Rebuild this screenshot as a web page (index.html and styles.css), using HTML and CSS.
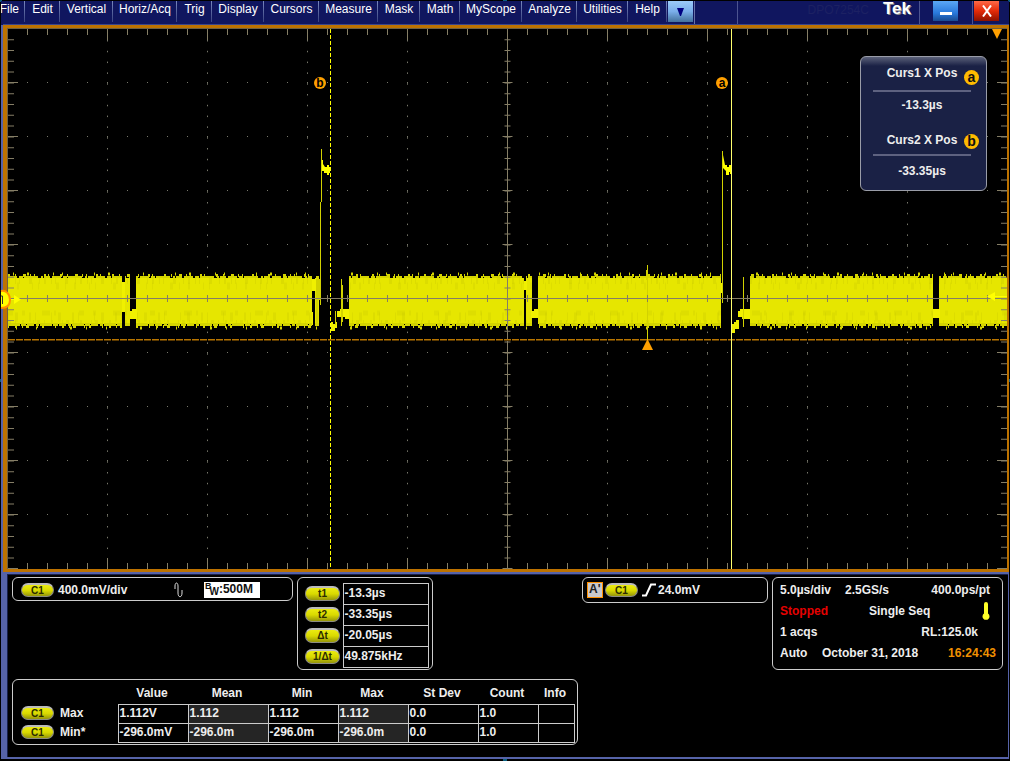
FILE: index.html
```html
<!DOCTYPE html>
<html lang="en">
<head>
<meta charset="utf-8">
<title>Tek DPO7254C</title>
<link rel="stylesheet" href="styles.css">
</head>
<body>
<div class="scope">
  <header class="menubar">
    <nav class="menus">
      <button class="menu first">File</button><button class="menu">Edit</button><button class="menu">Vertical</button><button class="menu">Horiz/Acq</button><button class="menu">Trig</button><button class="menu">Display</button><button class="menu">Cursors</button><button class="menu">Measure</button><button class="menu">Mask</button><button class="menu">Math</button><button class="menu">MyScope</button><button class="menu">Analyze</button><button class="menu">Utilities</button><button class="menu">Help</button>
    </nav>
    <div class="more"><button class="more-btn" aria-label="More menus"><svg width="8" height="8" viewBox="0 0 8 8"><path d="M0 0H7L4 8H3Z" fill="#000080"/></svg></button></div>
    <div class="slot"></div>
    <div class="brand"><span class="model">DPO7254C</span><span class="tek">Tek</span></div>
    <div class="win"><button class="win-btn min" aria-label="Minimize"><svg width="12" height="3"><rect width="12" height="3" fill="#fff"/></svg></button></div>
    <div class="win last"><button class="win-btn close" aria-label="Close"><svg width="10" height="12" viewBox="0 0 10 12"><path d="M1 0.5L9 11.5M9 0.5L1 11.5" stroke="#fff" stroke-width="2"/></svg></button></div>
  </header>

  <main class="plot">
    <svg class="trace" viewBox="8 29 999 540" role="img" aria-label="Channel 1 waveform">
      <defs>
        <clipPath id="bursts">
          <path d="M8 265H122V335H8ZM125 265H130V335H125ZM136 265H312V335H136ZM315 265H319V335H315ZM349 265H524V335H349ZM526 265H532V335H526ZM538 265H721V335H538ZM750 265H933V335H750ZM939 265H1007V335H939Z"/>
        </clipPath>
      </defs>

      <g fill="none" stroke="#77776a">
        <path d="M107.500 29V569M207.500 29V569M307.500 29V569M407.500 29V569M607.500 29V569M707.500 29V569M807.500 29V569M907.500 29V569" stroke-dasharray="1.500 9.300" stroke-dashoffset="-0.200"/>
        <path d="M27 82.500H1007M27 136.500H1007M27 190.500H1007M27 244.500H1007M27 352.500H1007M27 406.500H1007M27 460.500H1007M27 514.500H1007" stroke-dasharray="1 19"/>
      </g>

      <g clip-path="url(#bursts)">
        <rect x="8" y="278" width="999" height="46" fill="#e6e600"/>
        <g fill="none" stroke="#d4d400">
          <path d="M8 277H1007" stroke-width="2" stroke-dasharray="9 2 4 1 14 3 2 1 6 2"/>
          <path d="M8 275.500H1007" stroke-width="3" stroke-dasharray="2 5 1 7 3 4 1 3 1 9 2 2 1 11"/>
          <path d="M13 274H1007" stroke-width="3" stroke-dasharray="1 13 2 24 1 8 1 31"/>
          <path d="M8 324.500H1007" stroke-width="3" stroke-dasharray="12 1 5 1 7 2 3 1"/>
          <path d="M8 326.500H1007" stroke-width="3" stroke-dasharray="1 6 2 5 1 3 3 8 1 4 2 11"/>
          <path d="M16 328H1007" stroke-width="3" stroke-dasharray="1 19 1 33 2 14"/>
        </g>
        <g fill="none" stroke="#cccc00">
          <path d="M8 281H1007" stroke-width="6" stroke-dasharray="2 5 1 3 1 9 3 7 1 4" opacity=".4"/>
          <path d="M8 286H1007" stroke-width="7" stroke-dasharray="1 8 2 13 1 5 1 17 3 6" opacity=".3"/>
          <path d="M8 313H1007" stroke-width="5" stroke-dasharray="5 9 3 17 8 4 2 23" opacity=".3"/>
          <path d="M8 317H1007" stroke-width="9" stroke-dasharray="1 6 3 11 2 4 1 15" opacity=".35"/>
          <path d="M8 322H1007" stroke-width="4" stroke-dasharray="3 4 1 6 2 9 1 3" opacity=".4"/>
        </g>
      </g>

      <g fill="#f0f000">
        <path d="M122 282H125V312H122ZM312 279H316V291H312ZM312 312H313V325H312ZM524 281H527V290H524ZM721 283H723V293H721Z"/>
        <path d="M130 311H132V309H137V319H130ZM531 311H534V309H538V318H531ZM933 309H940V318H933Z"/>
        <path d="M316 279H320V300H318V325H316Z" fill="#d2d200"/>
        <path d="M331 322H333V324H335V322H337V328H335V331H331ZM337 311H340V309H349V319H345V317H337ZM731 324H734V322H736V320H739V329H735V333H732ZM738 311H740V309H750V319H742V317H738Z"/>
        <path d="M322 160H323V164L325 167H327V165H329V167H330V173H329V175H327V173H324V171H322ZM722 155H723L725 165H727V167H729V165H731V174H730V172H729V175H726V171L723 168Z" fill="#ff0"/>
      </g>
      <g stroke="#d2d200" fill="none">
        <path d="M320.500 202V305M321.500 149V202M722.500 151V303M335.500 311V325M341.500 279V326M342.500 285V322M743.500 277V327M647.500 265V341M646.500 270V280"/>
      </g>

      <g fill="none" stroke="#857e66">
        <path d="M8 298.500H1007M507.500 29V569"/>
        <path d="M27 298.500H1007" stroke-width="7" stroke-dasharray="1 19"/>
        <path d="M27 32H1007M27 566H1007" stroke-width="6" stroke-dasharray="1 19"/>
        <path d="M107 34.500H1007M107 563.500H1007" stroke-width="11" stroke-dasharray="1 99"/>
        <path d="M11 39.200V569M507.500 39.200V569M1004 39.200V569" stroke-width="6" stroke-dasharray="1 9.800"/>
        <path d="M13 82V569M507.500 82V569M1002 82V569" stroke-width="10" stroke-dasharray="1 53"/>
      </g>

      <path d="M8 339.500H1007" stroke="#b87500" stroke-dasharray="7 1"/>
      <path d="M8 340.500H1007" stroke="#5b3900" stroke-dasharray="7 1"/>
      <path d="M330.500 29V569" stroke="#ff0" stroke-dasharray="4 2"/>
      <path d="M731.500 29V569" stroke="#ffff6e"/>

      <path d="M992 29H1002L997 39Z" fill="#ffa000"/>
      <path d="M647.500 339L653 350H642Z" fill="#ffa000"/>
      <path d="M987 296.500L995 292V296H1007V297H995V301Z" fill="#ff0"/>
      <path d="M10 299H14V295L21 299.500L14 304V300H10Z" fill="#ff0"/>
      <path d="M1 291C6 290 10 294 10 300S6 308 1 308Z" fill="#ff0"/>
      <path d="M1 291C6 290 10 294 10 300S6 308 1 308" fill="none" stroke="#ff9000" stroke-width="2"/>
      <path d="M1 296H2.500V304" fill="none" stroke="#333"/>

      <g class="cursor-tag">
        <circle cx="320" cy="83" r="6"/><text x="320" y="87">b</text>
        <circle cx="722" cy="83" r="6"/><text x="722" y="87">a</text>
      </g>
    </svg>

    <aside class="readout">
      <div class="readout-head">Curs1 X Pos<span class="badge">a</span></div>
      <div class="readout-value">-13.3µs</div>
      <div class="readout-head second">Curs2 X Pos<span class="badge">b</span></div>
      <div class="readout-value">-33.35µs</div>
    </aside>
  </main>

  <footer class="status">
    <div class="top-row">
      <section class="box channel">
        <span class="pill">C1</span><span class="scale">400.0mV/div</span>
        <svg class="sine" width="10" height="16" viewBox="0 0 10 16"><path d="M1 7V4C1 0 4 0 4 4V11C4 16 8 16 8 11V8" fill="none" stroke="#ddd"/></svg>
        <span class="bandwidth"><sup>B</sup><sub>W</sub>:500M</span>
      </section>

      <section class="box cursors">
        <table class="cursor-table">
          <tr><th scope="row"><span class="pill wide">t1</span></th><td>-13.3µs</td></tr>
          <tr><th scope="row"><span class="pill wide">t2</span></th><td>-33.35µs</td></tr>
          <tr><th scope="row"><span class="pill wide">Δt</span></th><td>-20.05µs</td></tr>
          <tr><th scope="row"><span class="pill wide">1/Δt</span></th><td>49.875kHz</td></tr>
        </table>
      </section>

      <section class="box trigger">
        <span class="a-tag">A'</span><span class="pill">C1</span>
        <svg width="14" height="14" viewBox="0 0 14 14"><path d="M0 12.500H4L9 1.500H14" fill="none" stroke="#fff" stroke-width="2"/></svg>
        <span>24.0mV</span>
      </section>

      <section class="box horizontal">
        <div class="line"><span class="c1">5.0µs/div</span><span>2.5GS/s</span><span class="end">400.0ps/pt</span></div>
        <div class="line"><span class="c2 stopped">Stopped</span><span>Single Seq</span>
          <svg class="end" width="8" height="18" viewBox="0 0 8 18"><path d="M2 2Q2 0 4 0T6 2V11.500A3.500 3.500 0 1 1 2 11.500Z" fill="#ffff28"/></svg></div>
        <div class="line"><span>1 acqs</span><span class="end rl">RL:125.0k</span></div>
        <div class="line last"><span class="c3">Auto</span><span>October 31, 2018</span><span class="end time">16:24:43</span></div>
      </section>
    </div>

    <section class="box measurements">
      <table class="measure-table">
        <colgroup><col class="w-name"><col class="w70"><col class="w80"><col class="w70"><col class="w70"><col class="w70"><col class="w60"><col class="w36"></colgroup>
        <thead><tr><td></td><th>Value</th><th>Mean</th><th>Min</th><th>Max</th><th>St Dev</th><th>Count</th><th>Info</th></tr></thead>
        <tbody>
          <tr><th scope="row"><span class="name"><span class="pill">C1</span>Max</span></th><td>1.112V</td><td class="shade">1.112</td><td>1.112</td><td class="shade">1.112</td><td>0.0</td><td>1.0</td><td></td></tr>
          <tr><th scope="row"><span class="name"><span class="pill">C1</span>Min*</span></th><td>-296.0mV</td><td class="shade">-296.0m</td><td>-296.0m</td><td class="shade">-296.0m</td><td>0.0</td><td>1.0</td><td></td></tr>
        </tbody>
      </table>
    </section>
  </footer>
</div>
</body>
</html>
```

FILE: styles.css
```css
* { box-sizing: border-box; }
body {
  margin: 0;
  background: #000;
  font-family: "Liberation Sans", Arial, sans-serif;
  font-size: 12px;
  color: #eee;
}
button { font: inherit; color: inherit; border: 0; padding: 0; margin: 0; cursor: pointer; }
.scope {
  min-height: 100vh;
  padding: 1px 1px 2px;
  display: flex;
  flex-direction: column;
  background:
    linear-gradient(#0b5f80, #0b5f80) 50% 0 / 4px 2px no-repeat,
    linear-gradient(#0b5f80, #0b5f80) 50% 100% / 4px 2px no-repeat,
    linear-gradient(#0b5f80, #0b5f80) 0 0 / 2px 2px no-repeat,
    linear-gradient(#0b5f80, #0b5f80) 0 50% / 1px 3px no-repeat,
    linear-gradient(#0b5f80, #0b5f80) 100% 0 / 2px 2px no-repeat,
    linear-gradient(#0b5f80, #0b5f80) 100% 50% / 1px 3px no-repeat,
    #000;
}

.menubar { display: flex; height: 24px; background: #10165f; color: #fff; }
.menus {
  display: grid;
  grid-template-columns: 24px 35px 53px 64px 35px 52px 55px 59px 42px 40px 62px 55px 51px 39px;
}
.menu {
  height: 21px;
  padding-bottom: 5px;
  background: linear-gradient(#7887bd, #39437f) 100% 0 / 1px 100% no-repeat;
  text-align: center;
  white-space: nowrap;
  overflow: hidden;
}
.menu.first { display: flex; justify-content: flex-end; align-items: center; padding-right: 6px; }
.more { width: 28px; padding-left: 1px; border-right: 1px solid #6872a8; }
.more-btn {
  width: 25px;
  height: 21px;
  display: grid;
  place-items: center;
  background: linear-gradient(#9ccbfa, #7aaeea 50%, #43719c);
}
.slot { width: 43px; border-right: 1px solid #4c5490; }
.brand {
  flex: 1;
  display: flex;
  justify-content: flex-end;
  padding-right: 8px;
  border-right: 1px solid #4c5490;
}
.model { color: #1c2163; padding: 2px 14px 0 0; line-height: 14px; }
.tek { font: bold 17px/16px "Liberation Sans", Arial, sans-serif; text-shadow: 1px 1px 0 #8a8a8a; }
.win { width: 53px; padding-left: 13px; border-right: 1px solid #4c5490; }
.win.last { width: 36px; padding-left: 1px; border: 0; }
.win-btn { width: 25px; height: 20px; display: grid; place-items: center; }
.min { background: linear-gradient(#5ba7f6, #2979dc 60%, #194b91); padding-top: 5px; }
.close { background: linear-gradient(#ff6a48, #e32a08 50%, #8c1200); }

.plot {
  position: relative;
  border: solid #bd7200;
  border-width: 3px 2px 3px 4px;
  margin-left: 2px;
  padding: 1px 0 0 1px;
  background: #6f6040;
  box-shadow: -2px 0 #5663a8, 0 -1px #39458c;
}
.trace { display: block; width: 100%; height: auto; background: #000; overflow: visible; }
.cursor-tag { fill: #ffa000; }
.cursor-tag text { fill: #000; font-size: 12px; font-weight: bold; text-anchor: middle; }

.readout {
  position: absolute;
  top: 28px;
  right: 20px;
  width: 127px;
  height: 135px;
  padding: 8px 15px 0 12px;
  border: 1px solid #9a9da8;
  border-radius: 6px;
  background: linear-gradient(#5b6179, #1a2145 9px);
  font-weight: bold;
  text-align: center;
}
.readout-head { position: relative; height: 27px; line-height: 16px; border-bottom: 2px solid #5e6280; }
.readout-head.second { height: 24px; margin-top: 11px; }
.readout-value { height: 29px; line-height: 26px; }
.second + .readout-value { line-height: 30px; }
.badge {
  position: absolute;
  right: -8px;
  top: 5px;
  width: 15px;
  height: 15px;
  border-radius: 50%;
  background: #fb0;
  color: #111;
  font-size: 14px;
  line-height: 14px;
}
.second .badge { top: 2px; }

.status {
  flex: 1;
  padding: 3px 5px 12px 5px;
  border: solid #5663a8;
  border-width: 2px 1px 2px 6px;
  background: #000;
  box-shadow: inset 1px 1px #18204c;
  font-weight: bold;
  white-space: nowrap;
}
.top-row { display: flex; align-items: flex-start; gap: 4px; }
.box { border: 1px solid #ccc; border-radius: 6px; }
.pill {
  display: inline-block;
  width: 33px;
  height: 14px;
  border: 1px solid #8c8c84;
  border-top: 2px solid #bbb;
  border-radius: 7px;
  background: linear-gradient(#ecec10, #d9d900 50%, #96960a);
  color: #2b2b00;
  font-size: 10px;
  line-height: 11px;
  text-align: center;
  flex: none;
}
.pill.wide { width: 35px; height: 15px; vertical-align: middle; }

.channel { width: 281px; height: 24px; display: flex; align-items: center; padding: 1px 32px 0 8px; }
.scale { margin-left: 4px; }
.sine { margin-left: auto; margin-right: 20px; }
.bandwidth {
  display: flex;
  width: 56px;
  height: 16px;
  padding-left: 1px;
  background: #fff;
  color: #111;
  line-height: 15px;
}
.bandwidth sup { font-size: 9px; line-height: 9px; }
.bandwidth sub { font-size: 10px; line-height: 20px; margin-left: -2px; }

.cursors { width: 136px; height: 93px; padding: 5px 3px 0 7px; }
.cursor-table { width: 100%; border-collapse: collapse; }
.cursor-table th { width: 38px; padding: 0 0 2px; text-align: left; line-height: 15px; }
.cursor-table td { height: 21px; padding: 0 0 1px 1px; border: 1px solid #ccc; line-height: 17px; }

.trigger { width: 186px; height: 26px; margin-left: auto; display: flex; align-items: center; gap: 2px; padding: 0 0 1px 4px; }
.trigger .pill { margin-right: 2px; }
.a-tag {
  width: 16px;
  height: 16px;
  border: 1px solid #ff9000;
  background: #c9c9cc;
  color: #222;
  line-height: 13px;
  padding-left: 1px;
}

.horizontal { width: 231px; height: 93px; padding: 1px 12px 0 7px; }
.line { display: flex; align-items: center; height: 21px; }
.end { margin-left: auto; }
.c1 { width: 65px; }
.c2 { width: 89px; }
.c3 { width: 42px; }
.stopped { color: #e60000; }
.rl { padding-right: 12px; }
.line.last { margin-right: -6px; }
.time { color: #f09000; }

.measurements { width: 566px; margin-top: 9px; padding: 4px 2px 0 0; height: 66px; }
.measure-table { width: 561px; table-layout: fixed; border-collapse: collapse; }
.w-name { width: 105px; }
.w36 { width: 36px; }
.w60 { width: 60px; }
.w70 { width: 70px; }
.w80 { width: 80px; }
.measure-table thead th { height: 20px; padding: 0 2px 2px 0; }
.measure-table th, .measure-table td { padding: 0; }
.measure-table tbody th { text-align: left; }
.measure-table tbody td { height: 19px; padding: 0 0 1px 1px; border: 1px solid #ccc; line-height: 15px; }
.shade { background: #252525; }
.name { display: flex; align-items: center; gap: 6px; padding: 0 0 2px 8px; }
```
